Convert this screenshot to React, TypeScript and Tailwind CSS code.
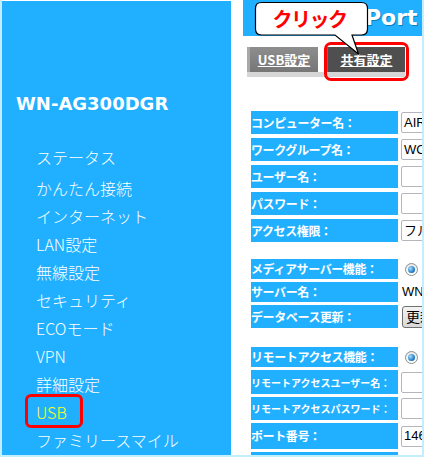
import React from "react";

const menu = [
  "ステータス",
  "かんたん接続",
  "インターネット",
  "LAN設定",
  "無線設定",
  "セキュリティ",
  "ECOモード",
  "VPN",
  "詳細設定",
  "USB",
  "ファミリースマイル",
];

function Label({ text, small }: { text: string; small?: boolean }) {
  return (
    <div
      className={
        "w-[147px] shrink-0 bg-[#20b0ff] flex items-center text-white font-bold whitespace-nowrap overflow-hidden font-['Noto_Sans_CJK_JP',sans-serif] " +
        (small ? "text-[10px]" : "text-[12px] tracking-[-0.4px]")
      }
    >
      {text}
    </div>
  );
}

function Input({ value }: { value?: string }) {
  return (
    <div className="w-[40px] h-[21px] shrink-0 bg-white border border-[#b4b6bc] rounded-[2px] flex items-center pl-[2px] text-[13px] text-black font-['Liberation_Sans','Noto_Sans_CJK_JP',sans-serif] whitespace-nowrap overflow-hidden">
      {value}
    </div>
  );
}

function Radio() {
  return (
    <div className="flex items-center pl-[4px] gap-[3px] whitespace-nowrap">
      <span className="w-[13px] h-[13px] rounded-full border border-[#8a8f96] bg-gradient-to-b from-[#e8e8e8] to-[#ffffff] flex items-center justify-center shrink-0">
        <span className="w-[7px] h-[7px] rounded-full bg-[radial-gradient(circle_at_35%_35%,#9fe0ff,#1a6fc0_70%)]" />
      </span>
      <span className="text-[12px] text-black font-['Noto_Sans_CJK_JP',sans-serif]">オン</span>
    </div>
  );
}

export default function App() {
  return (
    <div className="relative w-[424px] h-[457px] overflow-hidden bg-white border-l-[2px] border-r-[2px] border-b-[2px] border-[#c4eefd] flex">
      {/* Sidebar */}
      <div className="w-[229px] shrink-0 mt-[1px] h-[454px] bg-[#20b0ff] flex flex-col">
        <div className="pt-[92px] pl-[14px] text-white text-[18px] font-bold leading-[22px] font-['DejaVu_Sans',sans-serif]">
          WN-AG300DGR
        </div>
        <div className="mt-[28px] pl-[34px] flex flex-col font-['Noto_Sans_CJK_JP',sans-serif] font-light text-[16px]">
          {menu.map((m, i) => (
            <div
              key={m}
              className={
                "relative h-[28px] leading-[28px] whitespace-nowrap " +
                (i === 0 ? "mb-[3px] " : "") +
                (m === "USB" ? "text-[#ffff1a]" : "text-white")
              }
            >
              {m}
              {m === "USB" && (
                <span className="absolute left-[-11px] top-[-4px] w-[58px] h-[34px] border-[3px] border-[#ff0000] rounded-[6px]" />
              )}
            </div>
          ))}
        </div>
      </div>

      <div className="w-[12px] shrink-0" />

      {/* Right column */}
      <div className="w-[179px] shrink-0 flex flex-col overflow-hidden">
        <div className="h-[36px] shrink-0 bg-[#20b0ff] pl-[122px] text-white text-[22px] font-bold leading-[36px] font-['DejaVu_Sans',sans-serif] whitespace-nowrap [text-shadow:1px_1px_0_#0a7fc0]">
          Port
        </div>

        <div className="mt-[11px] pl-[4px] flex flex-col">
          <div className="flex h-[25px] gap-[7px]">
            <div className="w-[71px] h-[25px] bg-gradient-to-b from-[#8e8e8e] to-[#767676] border-l-[3px] border-[#a8a8a8] flex items-center justify-center text-white font-bold underline text-[13px] font-['Noto_Sans_CJK_JP',sans-serif]">
              USB設定
            </div>
            <div className="w-[80px] h-[25px] bg-[#4f4f4f] border-l-[3px] border-[#6c6c6c] flex items-center justify-center text-white font-bold underline text-[13px] font-['Noto_Sans_CJK_JP',sans-serif]">
              共有設定
            </div>
          </div>
          <div className="w-[158px] h-[5px] bg-[#d6d6d6]" />
        </div>

        <div className="pl-[8px] mt-[34px] flex flex-col">
          <div className="flex flex-col gap-[4px]">
            <div className="flex h-[23px] gap-[3px]">
              <Label text="コンピューター名：" />
              <div className="flex items-center"><Input value="AIRPORT" /></div>
            </div>
            <div className="flex h-[23px] gap-[3px]">
              <Label text="ワークグループ名：" />
              <div className="flex items-center"><Input value="WORKGROUP" /></div>
            </div>
            <div className="flex h-[23px] gap-[3px]">
              <Label text="ユーザー名：" />
              <div className="flex items-center"><Input /></div>
            </div>
            <div className="flex h-[23px] gap-[3px]">
              <Label text="パスワード：" />
              <div className="flex items-center"><Input /></div>
            </div>
            <div className="flex h-[23px] gap-[3px]">
              <Label text="アクセス権限：" />
              <div className="flex items-center"><Input value="フルアクセス" /></div>
            </div>
          </div>

          <div className="mt-[17px] flex flex-col gap-[3px]">
            <div className="flex h-[20px] gap-[3px]">
              <Label text="メディアサーバー機能：" />
              <Radio />
            </div>
            <div className="flex h-[20px] gap-[3px]">
              <Label text="サーバー名：" />
              <div className="flex items-center pl-[1px] text-[13px] text-black whitespace-nowrap font-['Liberation_Sans',sans-serif]">
                WNAG300DGR
              </div>
            </div>
            <div className="flex h-[23px] gap-[3px]">
              <Label text="データベース更新：" />
              <div className="flex items-center pl-[1px]">
                <div className="h-[22px] w-[40px] bg-gradient-to-b from-[#f4f4f4] to-[#d8d8d8] border border-[#707070] rounded-[3px] flex items-center pl-[3px] text-[14px] text-black whitespace-nowrap font-['Noto_Sans_CJK_JP',sans-serif]">
                  更新
                </div>
              </div>
            </div>
          </div>

          <div className="mt-[19px] flex flex-col gap-[3px]">
            <div className="flex h-[20px] gap-[3px]">
              <Label text="リモートアクセス機能：" />
              <Radio />
            </div>
            <div className="flex h-[24px] gap-[3px]">
              <Label text="リモートアクセスユーザー名：" small />
              <div className="flex items-center"><Input /></div>
            </div>
            <div className="flex h-[23px] gap-[3px]">
              <Label text="リモートアクセスパスワード：" small />
              <div className="flex items-center"><Input /></div>
            </div>
            <div className="flex h-[26px] gap-[3px]">
              <Label text="ポート番号：" />
              <div className="flex items-center"><Input value="14698" /></div>
            </div>
            <div className="flex h-[20px] gap-[3px]">
              <Label text="" />
            </div>
          </div>
        </div>
      </div>

      {/* Red highlight around tab */}
      <div className="absolute left-[322px] top-[42px] w-[85px] h-[39px] border-[3px] border-[#ff0000] rounded-[7px]" />

      {/* Callout */}
      <svg
        className="absolute left-[248px] top-0"
        width="124"
        height="60"
        viewBox="248 0 124 60"
      >
        <path
          d="M259.5 2.5 H359.5 Q365.5 2.5 365.5 8.5 V29 Q365.5 35 359.5 35 H350 L356.5 54 L333 35 H259.5 Q253.5 35 253.5 29 V8.5 Q253.5 2.5 259.5 2.5 Z"
          fill="#ffffff"
          stroke="#000000"
          strokeWidth="1.2"
        />
      </svg>
      <div className="absolute left-[251px] top-[2px] w-[113px] h-[33px] flex items-center justify-center text-[#ff0000] text-[20px] font-bold tracking-[-1.5px] font-['Noto_Sans_CJK_JP',sans-serif]">
        クリック
      </div>
    </div>
  );
}
